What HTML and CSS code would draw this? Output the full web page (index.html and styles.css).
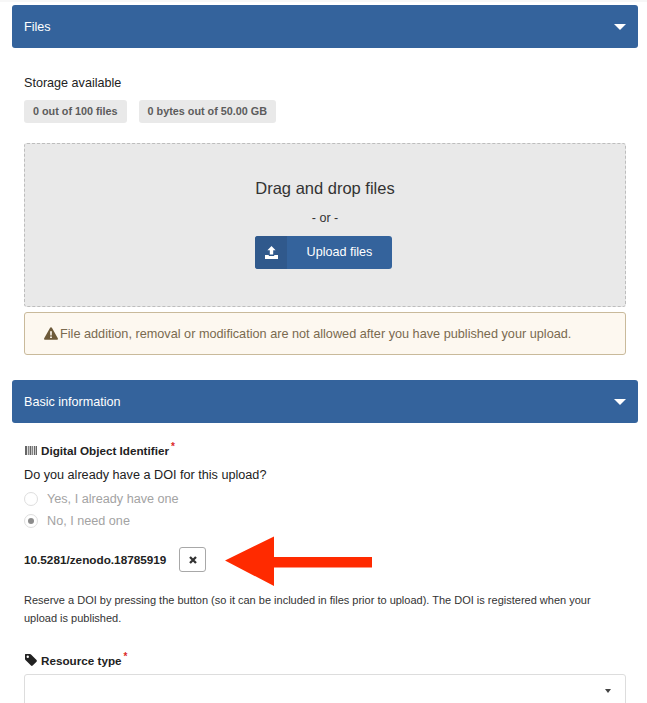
FILE: index.html
```html
<!DOCTYPE html>
<html lang="en">
<head>
  <meta charset="UTF-8" />
  <title>New upload</title>
  <link rel="stylesheet" href="styles.css">
</head>
<body>

<div class="page">
  <div class="panel-head">
    <span>Files</span>
    <span class="caret"></span>
  </div>

  <div class="section files">
    <div class="storage-title">Storage available</div>
    <div class="labels">
      <span class="label">0 out of 100 files</span>
      <span class="label">0 bytes out of 50.00 GB</span>
    </div>

    <div class="dropzone">
      <div class="drop-title">Drag and drop files</div>
      <div class="drop-or">- or -</div>
      <button class="upload-btn" type="button">
        <span class="upload-icon">
          <svg width="13" height="13" viewBox="0 0 13 13">
            <path fill="#fff" d="M6.500 0 10.600 4.300H8.200V8.600H4.800V4.300H2.400Z" />
            <path fill="#fff" d="M0 9H3.800V9.900H9.200V9H13V13H0Z" />
          </svg>
        </span>
        <span class="upload-text">Upload files</span>
      </button>
    </div>

    <div class="warning">
      <svg class="warning-icon" width="14" height="13" viewBox="0 0 14 13">
        <path fill="#6d5a3a" fill-rule="evenodd" d="M7 0.300C7.400 0.300 7.700 0.500 7.900 0.800L13.800 11.300C14.200 12 13.700 12.800 12.900 12.800H1.100C0.300 12.800 -0.200 12 0.200 11.300L6.100 0.800C6.300 0.500 6.600 0.300 7 0.300ZM6.100 4.200 6.300 8.400H7.700L7.900 4.200ZM6.100 9.400V11H7.900V9.400Z" />
      </svg>
      <span>File addition, removal or modification are not allowed after you have published your upload.</span>
    </div>
  </div>

  <div class="panel-head">
    <span>Basic information</span>
    <span class="caret"></span>
  </div>

  <div class="section basic">
    <div class="field-label">
      <svg class="barcode" width="12" height="9" viewBox="0 0 12 9">
        <path fill="#666" d="M0 0H2V9H0ZM2.800 0H3.800V9H2.800ZM4.600 0H6.400V9H4.600ZM7.200 0H8.200V9H7.200ZM9 0H10V9H9ZM10.600 0H12V9H10.600Z" />
      </svg>
      <span>Digital Object Identifier</span><span class="req">*</span>
    </div>
    <div class="question">Do you already have a DOI for this upload?</div>
    <div class="radio-row"><span class="radio"></span>Yes, I already have one</div>
    <div class="radio-row"><span class="radio checked"></span>No, I need one</div>
    <div class="doi-row">
      <span class="doi">10.5281/zenodo.18785919</span>
      <button class="clear-btn" type="button">
        <svg width="8" height="8" viewBox="0 0 8 8">
          <path stroke="#333" stroke-width="2.300" d="M1 1 7 7M7 1 1 7" />
        </svg>
      </button>
    </div>
    <p class="help">Reserve a DOI by pressing the button (so it can be included in files prior to upload). The DOI is registered when your upload is published.</p>

    <div class="field-label resource">
      <svg class="tag" width="12" height="12" viewBox="0 0 13 13">
        <path fill="#222" fill-rule="evenodd" d="M0.500 0H5.400C5.800 0 6.200 0.200 6.500 0.500L12.500 6.500C13 7 13 7.800 12.500 8.300L8.300 12.500C7.800 13 7 13 6.500 12.500L0.500 6.500C0.200 6.200 0 5.800 0 5.400V0.500C0 0.200 0.200 0 0.500 0ZM3 1.700A1.300 1.300 0 1 0 3 4.300 1.300 1.300 0 1 0 3 1.700Z" />
      </svg>
      <span>Resource type</span><span class="req">*</span>
    </div>
    <div class="select"><span class="select-caret"></span></div>
  </div>

  <!-- red annotation arrow on top of the screenshot -->
  <svg class="arrow" width="150" height="52" viewBox="0 0 150 52">
    <path fill="#ff2a00" d="M0 24.500 49 0.500V21H147V31.500H49V50Z" />
  </svg>
</div>

</body>
</html>
```

FILE: styles.css
```css
html, body {
  margin: 0;
  height: 703px;
  overflow: hidden;
  background: #fff;
}

.page {
  position: relative;
  height: 703px;
  padding: 3px 9px 0 12px;
  box-sizing: border-box;
  overflow: hidden;
  border-top: 2px solid #f7f7f7;
  font-family: "Liberation Sans", Arial, sans-serif;
  font-size: 12.600px;
  color: #222;
}

.panel-head {
  display: flex;
  align-items: center;
  justify-content: space-between;
  height: 43px;
  padding: 0 12px;
  box-sizing: border-box;
  background: #34639c;
  color: #fff;
  border-radius: 3px;
}

.caret {
  width: 0;
  height: 0;
  border-left: 6px solid transparent;
  border-right: 6px solid transparent;
  border-top: 6px solid #fff;
}

.section {
  padding: 0 12px;
}

.files {
  padding-top: 27px;
  padding-bottom: 25px;
}

.storage-title {
  line-height: 16px;
}

.labels {
  display: flex;
  gap: 12px;
  margin-top: 9px;
}

.label {
  height: 23px;
  line-height: 23px;
  padding: 0 9px;
  background: #e9e9e9;
  border-radius: 3px;
  color: #5c5c5c;
  font-size: 10.800px;
  font-weight: bold;
}

.dropzone {
  display: flex;
  flex-direction: column;
  align-items: center;
  height: 164px;
  margin-top: 20px;
  padding-top: 35px;
  box-sizing: border-box;
  background: #e9e9e9;
  border: 1px dashed #bdbdbd;
  border-radius: 3px;
}

.drop-title {
  font-size: 16.500px;
  line-height: 18px;
  color: #333;
}

.drop-or {
  margin-top: 14px;
  font-size: 12.500px;
  line-height: 14px;
  color: #333;
}

.upload-btn {
  display: flex;
  width: 137px;
  height: 33px;
  margin-top: 11px;
  margin-right: 3px;
  padding: 0;
  border: none;
  border-radius: 3px;
  background: #34639c;
  color: #fff;
  font: inherit;
  overflow: hidden;
}

.upload-icon {
  display: flex;
  align-items: center;
  justify-content: center;
  width: 32px;
  height: 33px;
  background: #30598c;
}

.upload-text {
  flex: 1;
  line-height: 32px;
  text-align: center;
}

.warning {
  display: flex;
  align-items: center;
  gap: 2px;
  height: 43px;
  margin-top: 5px;
  padding-left: 19px;
  box-sizing: border-box;
  background: #fdf8f0;
  border: 1px solid #c9ba9b;
  border-radius: 3px;
  color: #7a6a4f;
  font-size: 12.700px;
}

.basic {
  padding-top: 19px;
}

.field-label {
  display: flex;
  align-items: center;
  gap: 4px;
  height: 16px;
  font-size: 11.700px;
  font-weight: bold;
}

.barcode,
.tag {
  margin-left: 1px;
}

.req {
  align-self: flex-start;
  margin-left: -2px;
  color: #db2828;
  font-size: 10px;
  line-height: 10px;
}

.question {
  margin-top: 9px;
  font-size: 12.650px;
  line-height: 16px;
}

.radio-row {
  display: flex;
  align-items: center;
  gap: 9px;
  height: 22px;
  color: #a3a3a3;
  font-size: 12.650px;
}

.question + .radio-row {
  margin-top: 5px;
}

.radio {
  display: flex;
  align-items: center;
  justify-content: center;
  width: 14px;
  height: 14px;
  box-sizing: border-box;
  border: 1px solid #dedede;
  border-radius: 50%;
}

.radio.checked::after {
  content: "";
  width: 6px;
  height: 6px;
  border-radius: 50%;
  background: #8c8c8c;
}

.doi-row {
  display: flex;
  align-items: center;
  gap: 13px;
  margin-top: 15px;
}

.doi {
  font-size: 11.750px;
  font-weight: bold;
}

.clear-btn {
  display: flex;
  align-items: center;
  justify-content: center;
  width: 27px;
  height: 25px;
  padding: 0;
  background: #fff;
  border: 1px solid #a8a8a8;
  border-radius: 3px;
}

.help {
  margin: 19px 0 0;
  font-size: 11px;
  line-height: 18px;
  color: #333;
}

.resource {
  margin-top: 25px;
}

.select {
  position: relative;
  height: 60px;
  margin-top: 6px;
  border: 1px solid #ddd;
  border-radius: 3px;
}

.select-caret {
  position: absolute;
  top: 14px;
  right: 14px;
  width: 0;
  height: 0;
  border-left: 3.500px solid transparent;
  border-right: 3.500px solid transparent;
  border-top: 4px solid #444;
}

.arrow {
  position: absolute;
  left: 225px;
  top: 534px;
}
```
